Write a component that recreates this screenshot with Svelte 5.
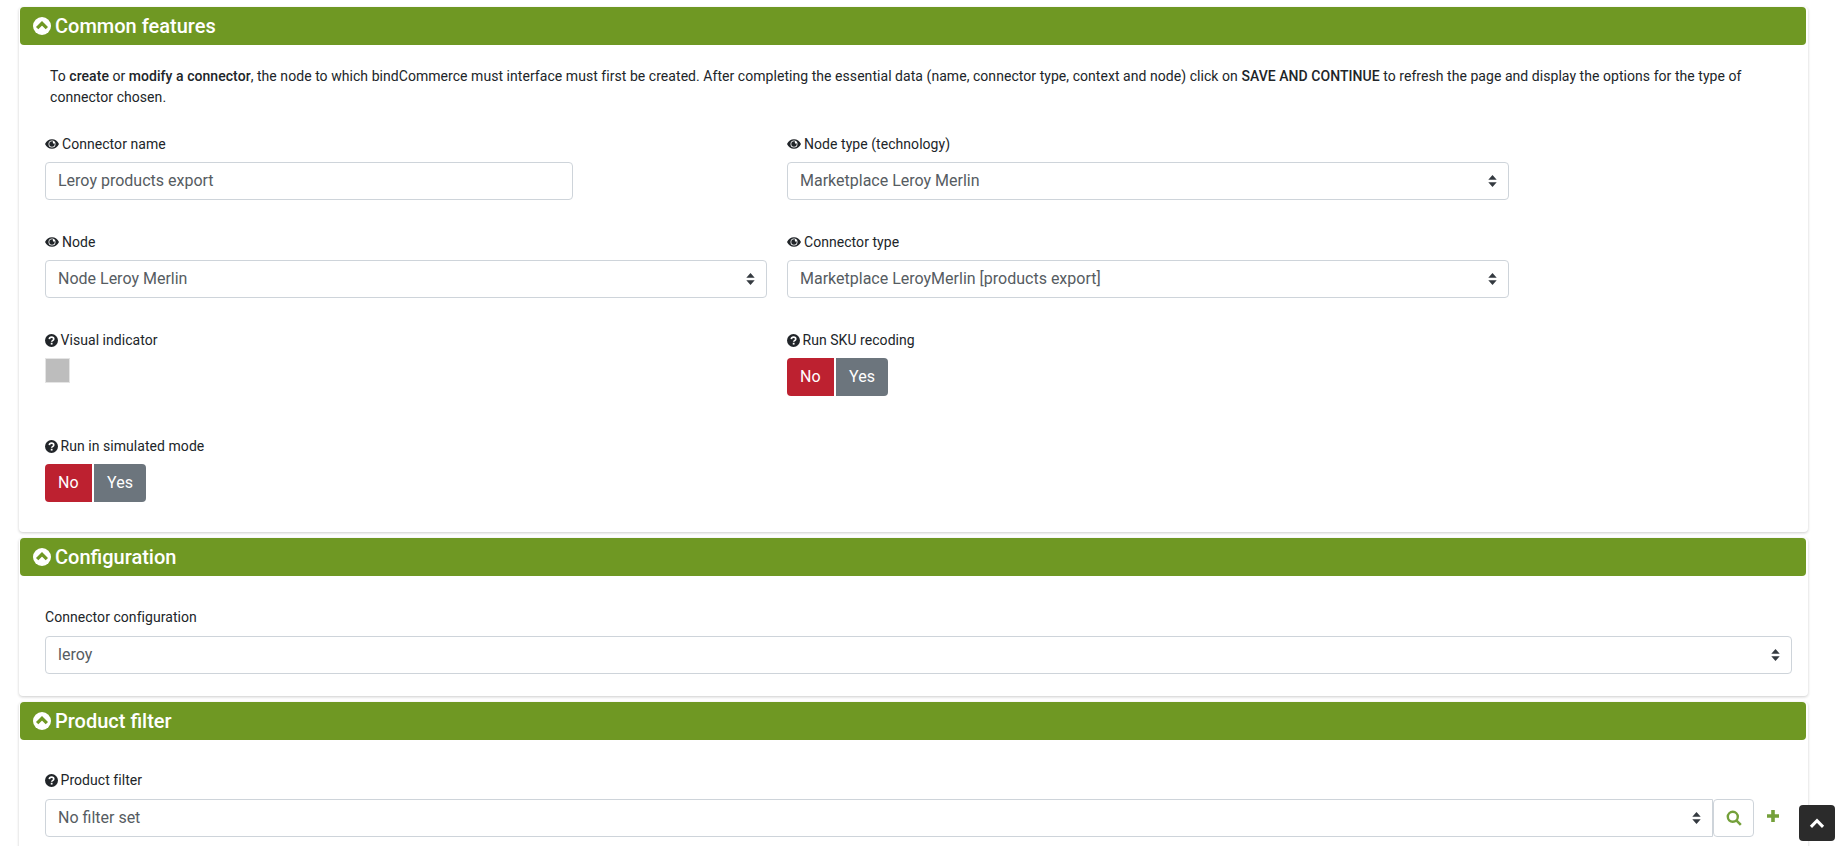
<script>
  const eye = "M8 2.6C4.5 2.6 1.6 4.8 0 8c1.6 3.2 4.5 5.4 8 5.4s6.4-2.2 8-5.4c-1.6-3.2-4.5-5.4-8-5.4zm0 9.4a4 4 0 1 1 0-8 4 4 0 0 1 0 8zM8 4.9A3.1 3.1 0 1 0 11.1 8c0-.3 0-.5-.1-.8-.2.3-.5.4-.8.4A1.3 1.3 0 0 1 8.9 6.3c0-.4.1-.7.4-1-.4-.2-.8-.4-1.3-.4z";
</script>

{#snippet chevron()}
  <svg class="chev" viewBox="0 0 20 20"><circle cx="10" cy="10" r="10" fill="#fff"/><path d="M4.6 12.4 10 7l5.4 5.4" fill="none" stroke="#6f9823" stroke-width="3.6"/></svg>
{/snippet}
{#snippet eyeIcon()}
  <svg class="ico eye" viewBox="0 0 16 16"><path d={eye} fill="#212529" fill-rule="evenodd"/></svg>
{/snippet}
{#snippet help()}
  <svg class="ico help" viewBox="0 0 16 16"><circle cx="8" cy="8" r="8" fill="#212529"/><path d="M5.3 6.3c.1-1.5 1.2-2.4 2.8-2.4s2.7.9 2.7 2.2c0 2-2.6 2-2.6 3.5" fill="none" stroke="#fff" stroke-width="2"/><rect x="7.1" y="10.8" width="2.2" height="2.2" fill="#fff"/></svg>
{/snippet}
{#snippet carets()}
  <svg class="carets" viewBox="0 0 9 12"><path d="M4.5 0l4.2 4.8H.3zM4.5 12L.3 7.2h8.4z" fill="#343a40"/></svg>
{/snippet}
{#snippet select(text)}
  <div class="control select"><span>{text}</span>{@render carets()}</div>
{/snippet}
{#snippet toggle()}
  <div class="toggle"><span class="no">No</span><span class="yes">Yes</span></div>
{/snippet}

<div class="page">
  <section class="card first">
    <h2>{@render chevron()}Common features</h2>
    <div class="body">
      <p class="intro">To <b>create</b> or <b>modify a connector</b>, the node to which bindCommerce must interface must first be created. After completing the essential data (name, connector type, context and node) click on <b>SAVE AND CONTINUE</b> to refresh the page and display the options for the type of connector chosen.</p>
      <div class="grid">
        <div class="field">
          <div class="label">{@render eyeIcon()}Connector name</div>
          <div class="control short"><span>Leroy products export</span></div>
        </div>
        <div class="field">
          <div class="label">{@render eyeIcon()}Node type (technology)</div>
          {@render select("Marketplace Leroy Merlin")}
        </div>
        <div class="field">
          <div class="label">{@render eyeIcon()}Node</div>
          {@render select("Node Leroy Merlin")}
        </div>
        <div class="field">
          <div class="label">{@render eyeIcon()}Connector type</div>
          {@render select("Marketplace LeroyMerlin [products export]")}
        </div>
        <div class="field">
          <div class="label">{@render help()}Visual indicator</div>
          <div class="swatch"></div>
        </div>
        <div class="field">
          <div class="label">{@render help()}Run SKU recoding</div>
          {@render toggle()}
        </div>
        <div class="field">
          <div class="label">{@render help()}Run in simulated mode</div>
          {@render toggle()}
        </div>
      </div>
    </div>
  </section>

  <section class="card">
    <h2>{@render chevron()}Configuration</h2>
    <div class="body compact">
      <div class="label">Connector configuration</div>
      {@render select("leroy")}
    </div>
  </section>

  <section class="card last">
    <h2>{@render chevron()}Product filter</h2>
    <div class="body compact">
      <div class="label">{@render help()}Product filter</div>
      <div class="filter">
        {@render select("No filter set")}
        <div class="search"><svg viewBox="0 0 16 16"><circle cx="6.8" cy="6.8" r="5" fill="none" stroke="#74a03a" stroke-width="2.4"/><path d="M10.4 10.4l4.4 4.4" stroke="#74a03a" stroke-width="2.6"/></svg></div>
        <svg class="plus" viewBox="0 0 14 14"><path d="M7 1v12M1 7h12" stroke="#74a03a" stroke-width="3.6"/></svg>
      </div>
    </div>
  </section>
</div>

<div class="top"><svg viewBox="0 0 14 10"><path d="M1.5 8 7 2.5 12.5 8" fill="none" stroke="#fff" stroke-width="2.8"/></svg></div>

<style>
  :global(body) { margin: 0; background: #fff; overflow: hidden; }
  .page {
    height: 846px; overflow: hidden; box-sizing: border-box; padding: 7px 33px 0 19px;
    font-family: Roboto, "Liberation Sans", sans-serif; font-size: 14px; color: #212529;
    display: flex; flex-direction: column; gap: 6px;
  }
  .card { box-shadow: 0 1px 3px rgba(0,0,0,.2); border-radius: 4px; background: #fff; flex: none; }
  h2 {
    margin: 0 2px 0 1px; height: 38px; background: #6f9823; color: #fff; border-radius: 4px;
    font-size: 20px; font-weight: 500; display: flex; align-items: center; padding-left: 13px; gap: 4px;
  }
  .chev { width: 18px; height: 18px; flex: none; }
  .body { padding: 21px 16px 0 26px; }
  .first .body { height: 487px; box-sizing: border-box; }
  .compact { padding-top: 32px; padding-bottom: 22px; }
  .last { height: 200px; }
  .last .compact { padding-top: 31px; }
  .intro { margin: 0 0 0 5px; line-height: 21px; height: 42px; letter-spacing: .05px; }
  b { font-weight: 500; }
  .grid { display: grid; grid-template-columns: 722px 722px; column-gap: 20px; grid-template-rows: 98px 98px 106px; margin-top: 27px; }
  .label { display: flex; align-items: center; gap: 3px; height: 18px; margin-bottom: 9px; line-height: 18px; letter-spacing: .05px; }
  .compact .label { margin-bottom: 10px; }
  .ico { flex: none; }
  .help { width: 13px; height: 13px; margin-right: -0.5px; }
  .eye { width: 14px; height: 14px; }
  .control {
    box-sizing: border-box; height: 38px; border: 1px solid #ced4da; border-radius: 4px; background: #fff;
    display: flex; align-items: center; padding: 0 12px 2px; font-size: 16px; color: #565c62;
  }
  .short { width: 528px; }
  .select { justify-content: space-between; flex: 1; }
  .carets { width: 9px; height: 12px; flex: none; margin-right: -1px; margin-top: 2px; }
  .swatch { width: 25px; height: 25px; background: #bdbdbd; border: 1px solid #e4e4e4; box-sizing: border-box; }
  .toggle { display: flex; gap: 2px; height: 38px; color: #fff; font-size: 16px; }
  .toggle span { display: flex; align-items: center; padding: 0 13px 2px; }
  .toggle .yes { padding: 0 13.5px 2px; }
  .no { background: #bd2130; border-radius: 4px 0 0 4px; }
  .yes { background: #6c757d; border-radius: 0 4px 4px 0; }
  .filter { display: flex; align-items: center; margin-right: 38px; position: relative; }
  .filter .control { border-radius: 4px 0 0 4px; }
  .search {
    width: 41px; height: 38px; box-sizing: border-box; border: 1px solid #ced4da; border-radius: 4px;
    display: flex; align-items: center; justify-content: center; flex: none;
  }
  .search svg { width: 16px; height: 16px; }
  .plus { position: absolute; right: -26px; top: 10px; width: 14px; height: 14px; }
  .top {
    position: fixed; left: 1799px; top: 805px; width: 36px; height: 36px; background: #2b2b2b; border-radius: 4px;
    display: flex; align-items: center; justify-content: center;
  }
  .top svg { width: 16px; height: 11px; }
</style>
